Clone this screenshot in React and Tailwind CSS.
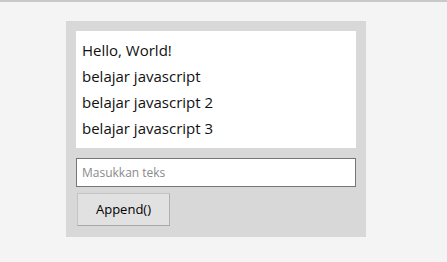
import { useState } from "react";

export default function App() {
  const [items, setItems] = useState([
    "Hello, World!",
    "belajar javascript",
    "belajar javascript 2",
    "belajar javascript 3",
  ]);
  const [teks, setTeks] = useState("");

  const append = () => {
    if (!teks) return;
    setItems([...items, teks]);
    setTeks("");
  };

  return (
    <div
      className="min-h-[262px] bg-[#f4f4f4] border-t-2 border-[#c9c9c9] pt-[19px] pl-[66px]"
      style={{ fontFamily: '"Open Sans", "Noto Sans", sans-serif' }}
    >
      <div className="w-[300px] bg-[#d8d8d8] p-[10px] pb-[11px]">
        <div className="bg-white pt-[6px] pb-[7px] px-[6px]">
          {items.map((item, i) => (
            <p key={i} className="text-[15px] leading-[26px] text-[#111]">
              {item}
            </p>
          ))}
        </div>

        <input
          type="text"
          value={teks}
          onChange={(e) => setTeks(e.target.value)}
          placeholder="Masukkan teks"
          className="mt-[10px] block w-full h-[29px] border border-[#767676] bg-white px-[5px] text-[12px] text-black placeholder:text-[#8a8a8a] outline-none"
        />

        <button
          onClick={append}
          className="mt-[6px] ml-px w-[93px] h-[33px] bg-[#e1e1e1] border border-[#c4c4c4] border-b-[#a8a8a8] border-r-[#b0b0b0] text-[13px] text-black"
        >
          Append()
        </button>
      </div>
    </div>
  );
}
